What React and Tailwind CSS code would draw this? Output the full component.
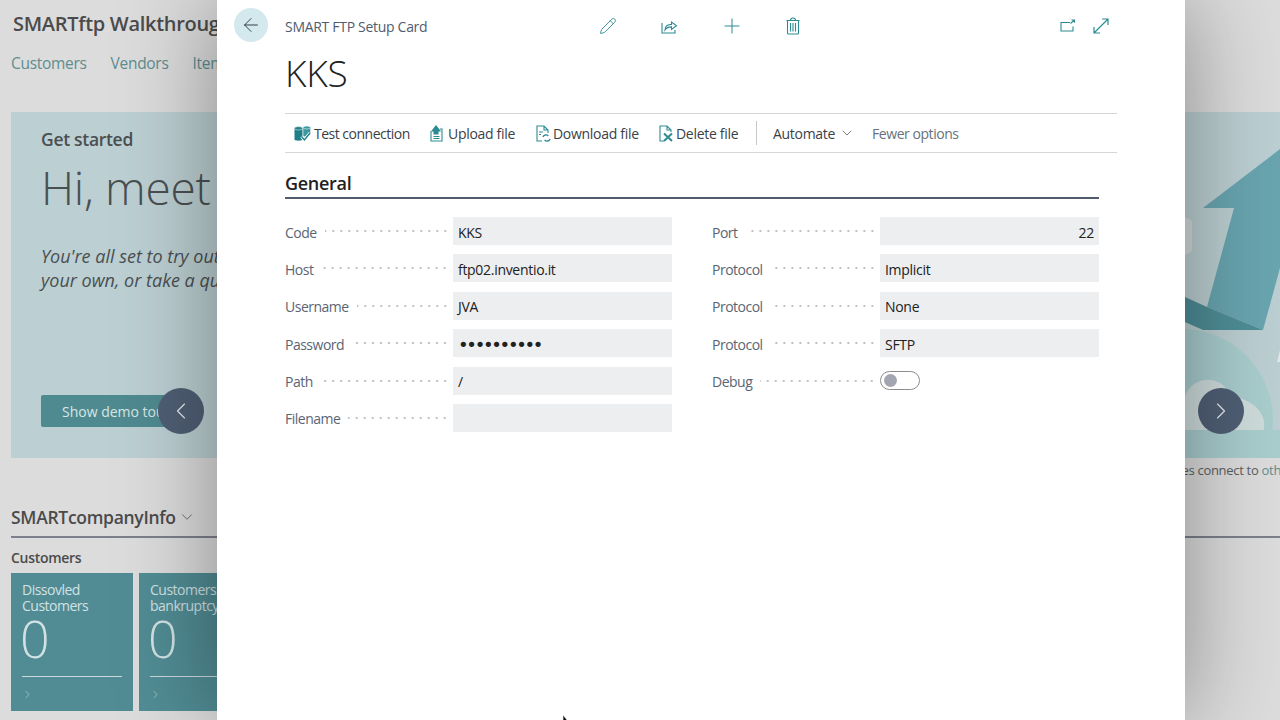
import React from 'react';
import { ArrowLeft, ChevronDown, ChevronLeft, ChevronRight, Plus, Pencil } from 'lucide-react';

const LEFT_FIELDS = [
  { label: 'Code', value: 'KKS' },
  { label: 'Host', value: 'ftp02.inventio.it' },
  { label: 'Username', value: 'JVA' },
  { label: 'Password', value: '••••••••••', isPassword: true },
  { label: 'Path', value: '/' },
  { label: 'Filename', value: '' },
];

const RIGHT_FIELDS = [
  { label: 'Port', value: '22', alignRight: true },
  { label: 'Protocol', value: 'Implicit' },
  { label: 'Protocol', value: 'None' },
  { label: 'Protocol', value: 'SFTP' },
];

const TEAL = '#2c8b93';

const ShareIcon = () => (
  <svg width="18" height="18" viewBox="0 0 18 18" fill="none" stroke={TEAL} strokeWidth="1.1">
    <path d="M2 6v10h13v-3" />
    <path d="M5 13c.3-3.6 2.6-5.6 6.5-5.6V5l5 3.8-5 3.7v-2.6c-2.8 0-5 .9-6.5 3.1z" />
  </svg>
);

const TrashIcon = () => (
  <svg width="16" height="18" viewBox="0 0 16 18" fill="none" stroke={TEAL} strokeWidth="1.1">
    <path d="M1.5 3.5h13M5.5 3.5C5.5 1.5 6 1 8 1s2.5.5 2.5 2.5M2.5 3.5V16c0 .6.4 1 1 1h9c.6 0 1-.4 1-1V3.5" />
    <path d="M5.5 6v8.5M8 6v8.5M10.5 6v8.5" />
  </svg>
);

const OpenNewIcon = () => (
  <svg width="16" height="14" viewBox="0 0 16 14" fill="none" stroke={TEAL} strokeWidth="1.1">
    <path d="M10 3.5H1v8.5h12V7.5" />
    <path d="M10.5 4.5 14.5 1M11.5 1h3v2.8" />
  </svg>
);

const ExpandIcon = () => (
  <svg width="16" height="16" viewBox="0 0 16 16" fill="none" stroke={TEAL} strokeWidth="1.2">
    <path d="M1.5 14.5 14.5 1.5M9 1h6v6M1 9v6h6" />
  </svg>
);

const TestConnectionIcon = () => (
  <svg width="17" height="17" viewBox="0 0 17 17">
    <path d="M0.5 3.5h8v11.3c-1.8 1.2-6.2 1.2-8 0z" fill="#1f7f88" />
    <ellipse cx="4.5" cy="3.3" rx="4" ry="1.7" fill="#1f7f88" stroke="#ffffff" strokeWidth="0.5" />
    <path d="M9.3 2.6h7v7l-3 2h-4z" fill="#3c98a0" />
    <ellipse cx="12.8" cy="2.5" rx="3.5" ry="1.5" fill="#3c98a0" stroke="#ffffff" strokeWidth="0.5" />
    <path d="M7.5 11.5 10.4 15 16 8" fill="none" stroke="#ffffff" strokeWidth="3" />
    <path d="M7.5 11.5 10.4 15 16 8" fill="none" stroke="#1f7f88" strokeWidth="1.4" />
  </svg>
);

const UploadIcon = () => (
  <svg width="16" height="17" viewBox="0 0 16 17" fill="none" stroke={TEAL} strokeWidth="1.1">
    <path d="M3 6v10h11V4h-2" />
    <path d="M4 6 8 1l4 5H10v3H6V6z" fill={TEAL} />
    <path d="M5.5 11.5h6M5.5 13.5h6" />
  </svg>
);

const DownloadIcon = () => (
  <svg width="16" height="17" viewBox="0 0 16 17" fill="none" stroke={TEAL} strokeWidth="1.1">
    <path d="M7 16H2V1h7l4 4v3M9 1v4h4" />
    <path d="M4 7h4M4 9.5h2" />
    <path d="M8 12c.4-2 3.6-3 5.4-1M15 14c-.4 2-3.6 3-5.4 1" strokeWidth="1.3" />
  </svg>
);

const DeleteIcon = () => (
  <svg width="16" height="17" viewBox="0 0 16 17" fill="none" stroke={TEAL} strokeWidth="1.1">
    <path d="M6 16H2V1h7l4 4v2M9 1v4h4" />
    <path d="M6 8.5 14 16M14 8.5 6 16" strokeWidth="2" />
  </svg>
);

const ACTIONS = [
  { name: 'Test connection', icon: <TestConnectionIcon />, box: 'w-[134px] gap-[3px] tracking-[-0.5px]' },
  { name: 'Upload file', icon: <UploadIcon />, box: 'w-[107px] gap-[4px]' },
  { name: 'Download file', icon: <DownloadIcon />, box: 'w-[123px] gap-[2px]' },
  { name: 'Delete file', icon: <DeleteIcon />, box: 'w-[98px] gap-[2px] tracking-[-0.3px]' },
];

const Field = ({ label, children }) => (
  <div className="flex h-[28px] items-center">
    <span className="shrink-0 pt-[2px] text-[14px] tracking-[-0.5px] text-[#5a6574]">{label}</span>
    <span className="ml-[8px] mr-[4px] h-[4px] flex-1 bg-[radial-gradient(circle,#bcc0c5_0.7px,transparent_0.9px)] bg-[length:8px_4px] bg-right bg-repeat-x" />
    {children}
  </div>
);

const ValueBox = ({ value, alignRight, isPassword }) => (
  <div className={`flex h-[28px] w-[219px] shrink-0 items-center bg-[#edeef0] px-[5px] pt-[2px] text-[#212121] ${alignRight ? 'justify-end' : ''} ${isPassword ? "font-['DejaVu_Sans',sans-serif] text-[18px] tracking-[-2.3px]" : 'text-[14px]'}`}>
    {value}
  </div>
);

const HeroArt = () => (
  <svg className="absolute right-0 top-0" width="95" height="346" viewBox="1185 112 95 346">
    <rect x="1185" y="112" width="95" height="346" fill="#bccfd2" />
    <rect x="1180" y="218" width="12" height="36" rx="5" fill="#d3d9da" />
    <circle cx="1182" cy="420" r="91" fill="#a9cdce" />
    <rect x="1185" y="430" width="95" height="28" fill="#a9cdce" />
    <path d="M1280 149 1203 208H1234L1207 307 1263 330 1280 268Z" fill="#69a5b0" />
    <path d="M1185 297 1207 307 1263 330H1203L1185 322Z" fill="#4f8e97" />
    <path d="M1277 362 1280 350V362Z" fill="#e3e8e8" />
    <path d="M1185 430V396C1192 376 1222 372 1232 398 1245 396 1268 410 1264 430Z" fill="#cfdcdc" />
  </svg>
);

const Tile = ({ lines }) => (
  <div className="flex h-[138px] w-[122px] shrink-0 flex-col bg-[#518c94] px-[11px] pt-[9px] text-[#d2e2e4]">
    <div className="whitespace-nowrap text-[14px] leading-[16px] tracking-[-0.5px]">
      {lines.map((line) => <div key={line}>{line}</div>)}
    </div>
    <div className="ml-[-2px] text-[52px] font-light leading-[48px]">0</div>
    <div className="mt-[14px] h-[1px] w-[100px] bg-[#c9dadc]" />
    <ChevronRight size={13} strokeWidth={1} className="ml-[-1px] mt-[11px]" />
  </div>
);

const App = () => {
  return (
    <div className="relative h-[720px] w-[1280px] overflow-hidden bg-[#dcdcdc] font-['Open_Sans',sans-serif] tracking-[-0.3px]">
      {/* Page behind the dialog */}
      <div className="h-[720px]">
        <h1 className="pl-[13px] pt-[10px] text-[20px] font-semibold leading-[28px] text-[#4b4b4b] whitespace-nowrap">SMARTftp Walkthrough</h1>
        <nav className="ml-[11px] mt-[13px] flex gap-[24px] text-[15.5px] leading-[24px] text-[#5f8c90]">
          <span>Customers</span>
          <span>Vendors</span>
          <span>Items</span>
        </nav>
        <section className="relative ml-[11px] mt-[37px] h-[346px] bg-[#bccfd2] pl-[30px] pt-[14px] text-[#4a5052]">
          <HeroArt />
          <h2 className="text-[17.5px] font-semibold leading-[26px]">Get started</h2>
          <div className="mt-[3px] text-[46px] font-light leading-[64px] whitespace-nowrap">Hi, meet</div>
          <p className="mt-[25px] text-[18px] italic leading-[24px] tracking-normal whitespace-nowrap">
            You're all set to try out<br />your own, or take a quick
          </p>
          <button className="mt-[103px] flex h-[32px] w-[140px] items-center rounded-[2px] bg-[#4f8a90] pl-[21px] text-[14px] font-medium tracking-normal text-[#d8e6e7] whitespace-nowrap">
            Show demo tour
          </button>
        </section>
        <p className="mt-[4px] pl-[1146.5px] text-[13px] leading-[16px] text-[#5a5f60] whitespace-nowrap">
          features connect to <span className="text-[#5f8c90]">other</span>
        </p>
        <div className="ml-[11px] mt-[25px] flex items-center gap-[2px] text-[#4b4b4b]">
          <span className="text-[17.5px] font-semibold leading-[28px]">SMARTcompanyInfo</span>
          <ChevronDown size={18} strokeWidth={1} />
        </div>
        <div className="ml-[11px] mt-[5px] h-[2px] bg-[#7d808c]" />
        <h3 className="ml-[11px] mt-[10px] text-[14px] font-semibold leading-[20px] text-[#4b4b4b]">Customers</h3>
        <div className="ml-[11px] mt-[5px] flex gap-[6px]">
          <Tile lines={['Dissovled', 'Customers']} />
          <Tile lines={['Customers in', 'bankruptcy']} />
        </div>
      </div>

      {/* Carousel arrows */}
      <div className="absolute left-[158px] top-[388px] flex h-[46px] w-[46px] items-center justify-center rounded-full bg-[#505f75] text-[#e6eaee]">
        <ChevronLeft size={28} strokeWidth={1} />
      </div>
      <div className="absolute left-[1198px] top-[388px] flex h-[46px] w-[46px] items-center justify-center rounded-full bg-[#505f75] text-[#e6eaee]">
        <ChevronRight size={28} strokeWidth={1} />
      </div>

      {/* Setup card dialog */}
      <div className="absolute left-[217px] top-0 h-[720px] w-[968px] bg-white shadow-[0_0_90px_rgba(0,0,0,0.38)]">
        <div className="flex h-[50px] items-start pl-[17px] pt-[8px]">
          <div className="flex h-[34px] w-[34px] items-center justify-center rounded-full bg-[#d4e9ee] text-[#263238]">
            <ArrowLeft size={22} strokeWidth={1} />
          </div>
          <span className="ml-[17px] mt-[8px] w-[316px] text-[14px] leading-[22px] text-[#505c6d]">SMART FTP Setup Card</span>
          <div className="flex h-[36px] items-center" style={{ color: TEAL }}>
            <Pencil size={18} strokeWidth={1.2} className="ml-[-2px]" />
            <span className="ml-[43px]"><ShareIcon /></span>
            <Plus size={24} strokeWidth={1} className="ml-[42px]" />
            <span className="ml-[41px]"><TrashIcon /></span>
          </div>
          <div className="ml-[259px] flex h-[36px] items-center gap-[17px]">
            <OpenNewIcon />
            <ExpandIcon />
          </div>
        </div>

        <div className="ml-[68px] mt-[-3px] text-[37px] font-light leading-[52px] text-[#212121]">KKS</div>

        <div className="ml-[68px] mt-[14px] flex h-[40px] w-[832px] items-center border-y border-[#d6d6d6] pl-[9px] text-[14px] text-[#3a3f47]">
          {ACTIONS.map((action) => (
            <div key={action.name} className={`flex items-center ${action.box}`}>
              {action.icon}
              <span className="whitespace-nowrap">{action.name}</span>
            </div>
          ))}
          <div className="h-[24px] w-[1px] bg-[#c8c8c8]" />
          <span className="ml-[16px]">Automate</span>
          <ChevronDown size={16} strokeWidth={1} className="ml-[4px]" />
          <span className="ml-[17px] tracking-[-0.45px] text-[#68717d]">Fewer options</span>
        </div>

        <div className="ml-[68px] mt-[17px] w-[814px]">
          <h2 className="text-[18px] font-semibold leading-[26px] text-[#212121]">General</h2>
          <div className="mt-[1px] h-[2px] bg-[#505c6d]" />
          <div className="mt-[18px] grid grid-cols-2 gap-x-[40px]">
            <div className="flex flex-col gap-[9.4px]">
              {LEFT_FIELDS.map((field) => (
                <Field key={field.label} label={field.label}>
                  <ValueBox value={field.value} isPassword={field.isPassword} />
                </Field>
              ))}
            </div>
            <div className="flex flex-col gap-[9.4px]">
              {RIGHT_FIELDS.map((field, i) => (
                <Field key={i} label={field.label}>
                  <ValueBox value={field.value} alignRight={field.alignRight} />
                </Field>
              ))}
              <Field label="Debug">
                <div className="flex w-[219px] shrink-0 items-center">
                  <div className="flex h-[19px] w-[40px] items-center rounded-full border border-[#8c8c8c] bg-white pl-[3px]">
                    <div className="h-[13px] w-[13px] rounded-full bg-[#a3a6b1]" />
                  </div>
                </div>
              </Field>
            </div>
          </div>
        </div>
      </div>

      {/* Mouse pointer */}
      <svg className="absolute left-[562px] top-[714px]" width="12" height="18" viewBox="0 0 12 18">
        <path d="M1 1v14l4-3.5 5 .5z" fill="#111111" stroke="#ffffff" strokeWidth="0.6" />
      </svg>
    </div>
  );
};

export default App;
